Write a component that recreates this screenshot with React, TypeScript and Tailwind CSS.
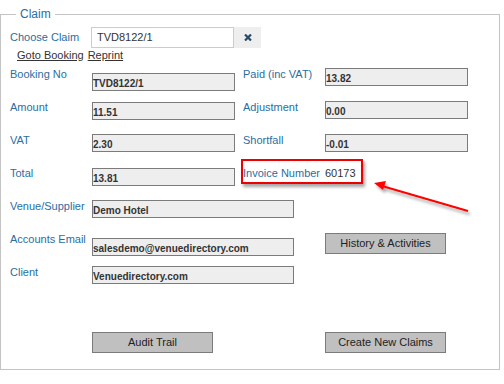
import React from "react"

type Field = { label: string; value?: string; off: number; wide?: boolean }

const font = "font-['Liberation_Sans',Arial,sans-serif]"

function Label({ children }: { children: React.ReactNode }) {
  return <div className="w-[82px] shrink-0 text-[11px] leading-[14px] text-[#2a6e9f]">{children}</div>
}

function ReadBox({ value, off, wide }: { value: string; off: number; wide?: boolean }) {
  return (
    <div
      className={`${wide ? "w-[202px]" : "w-[143px]"} h-[18px] shrink-0 border border-[#7b7b7b] bg-[#eeeeee] flex items-center pt-[2px] text-[10px] font-bold text-[#333]`}
      style={{ marginTop: off }}
    >
      {value}
    </div>
  )
}

function GreyButton({ children, className }: { children: React.ReactNode; className?: string }) {
  return (
    <button
      className={`w-[121px] h-[21px] border border-[#7b7b7b] bg-[#c0c0c0] text-[11px] text-[#222] flex items-center justify-center ${className ?? ""}`}
    >
      {children}
    </button>
  )
}

function Row({ left, right }: { left: Field; right?: React.ReactNode }) {
  return (
    <div className="flex h-[33px] items-start">
      <Label>{left.label}</Label>
      <ReadBox value={left.value ?? ""} off={left.off} wide={left.wide} />
      {right && <div className="ml-[8px] flex items-start">{right}</div>}
    </div>
  )
}

export default function App() {
  return (
    <div className={`w-[504px] h-[384px] bg-white relative overflow-hidden ${font}`}>
      <fieldset className="w-[500px] h-[363px] mt-[7px] border border-[#c4c4c4] pl-[9px]">
        <legend className="ml-[6px] px-[4px] text-[12px] leading-[14px] text-[#2a6e9f]">Claim</legend>

        <div className="flex items-center mt-[6px] h-[21px]">
          <div className="w-[81px] text-[11px] text-[#2a6e9f]">Choose Claim</div>
          <div className="w-[143px] h-[21px] border border-[#cccccc] bg-white flex items-center px-[5px] text-[11px] text-[#333]">
            TVD8122/1
          </div>
          <div className="w-[27px] h-[21px] bg-[#eeeeee] flex items-center justify-center">
            <svg width="8" height="7" viewBox="0 0 8 7">
              <path d="M1 0.5 L7 6.5 M7 0.5 L1 6.5" stroke="#2c4a68" strokeWidth="2.2" />
            </svg>
          </div>
        </div>

        <div className="ml-[7px] text-[11px] leading-[14px] text-[#333] flex gap-[4px]">
          <span className="underline">Goto Booking</span>
          <span className="underline">Reprint</span>
        </div>

        <div className="mt-[5px] flex flex-col">
          <Row
            left={{ label: "Booking No", value: "TVD8122/1", off: 6 }}
            right={
              <>
                <Label>Paid (inc VAT)</Label>
                <ReadBox value="13.82" off={1} />
              </>
            }
          />
          <Row
            left={{ label: "Amount", value: "11.51", off: 2 }}
            right={
              <>
                <Label>Adjustment</Label>
                <ReadBox value="0.00" off={1} />
              </>
            }
          />
          <Row
            left={{ label: "VAT", value: "2.30", off: 1 }}
            right={
              <>
                <Label>Shortfall</Label>
                <ReadBox value="-0.01" off={1} />
              </>
            }
          />
          <Row
            left={{ label: "Total", value: "13.81", off: 2 }}
            right={
              <>
                <Label>Invoice Number</Label>
                <div className="text-[11px] leading-[14px] text-[#333]">60173</div>
              </>
            }
          />
          <Row left={{ label: "Venue/Supplier", value: "Demo Hotel", off: 1, wide: true }} />
          <Row
            left={{ label: "Accounts Email", value: "salesdemo@venuedirectory.com", off: 6, wide: true }}
            right={<GreyButton className="ml-[23px] mt-[1px]">History &amp; Activities</GreyButton>}
          />
          <Row left={{ label: "Client", value: "Venuedirectory.com", off: 1, wide: true }} />
        </div>

        <div className="flex mt-[34px] pl-[82px]">
          <GreyButton>Audit Trail</GreyButton>
          <GreyButton className="ml-[112px]">Create New Claims</GreyButton>
        </div>
      </fieldset>

      {/* annotation */}
      <div className="absolute left-[241px] top-[159px] w-[122px] h-[25px] border-2 border-[#ee0000] shadow-[2px_3px_3px_rgba(0,0,0,0.35)]" />
      <svg className="absolute left-0 top-0" width="504" height="384">
        <defs>
          <filter id="sh" x="-10%" y="-10%" width="130%" height="150%">
            <feDropShadow dx="2" dy="3" stdDeviation="1.5" floodColor="#000" floodOpacity="0.35" />
          </filter>
        </defs>
        <g filter="url(#sh)">
          <line x1="468" y1="211" x2="382" y2="186" stroke="#ff0000" strokeWidth="2" />
          <path d="M374 183 L386 181 L383 190 Z" fill="#ff0000" />
        </g>
      </svg>
    </div>
  )
}
